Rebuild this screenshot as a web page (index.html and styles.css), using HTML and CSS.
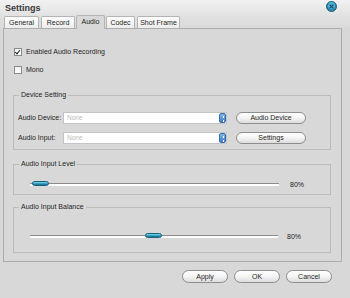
FILE: index.html
```html
<!DOCTYPE html>
<html lang="en">
  <head>
    <meta charset="UTF-8" />
    <title>Settings</title>
    <link rel="stylesheet" href="styles.css">
  </head>
  <body>
    <div class="window">
      <div class="titlebar">
        <span class="title">Settings</span>
        <svg class="close" width="11" height="11" viewBox="0 0 11 11">
          <circle cx="5.5" cy="5.5" r="5" fill="#2b88ad" stroke="#1d5f7c" stroke-width="1" />
          <circle cx="5.5" cy="4.5" r="3.6" fill="#5cc3e3" opacity="0.7" />
          <path d="M3.6 3.6 L7.4 7.4 M7.4 3.6 L3.6 7.4" stroke="#1d4f68" stroke-width="1.3" />
        </svg>
      </div>

      <div class="tabs">
        <div class="tab t-general">General</div>
        <div class="tab t-record">Record</div>
        <div class="tab active t-audio">Audio</div>
        <div class="tab t-codec">Codec</div>
        <div class="tab t-shot">Shot Frame</div>
      </div>

      <div class="panel">
        <label class="check-row">
          <span class="checkbox checked"></span>Enabled Audio Recording
        </label>
        <label class="check-row second">
          <span class="checkbox"></span>Mono
        </label>

        <fieldset class="group device">
          <legend>Device Setting</legend>
          <div class="field-row">
            <span class="field-label">Audio Device:</span>
            <div class="combo"><span>None</span><i class="spin"></i></div>
            <button class="pill wide">Audio Device</button>
          </div>
          <div class="field-row">
            <span class="field-label">Audio Input:</span>
            <div class="combo"><span>None</span><i class="spin"></i></div>
            <button class="pill wide">Settings</button>
          </div>
        </fieldset>

        <fieldset class="group level">
          <legend>Audio Input Level</legend>
          <div class="slider-row">
            <div class="track"><div class="thumb" style="left: 2px"></div></div>
            <span class="value">80%</span>
          </div>
        </fieldset>

        <fieldset class="group balance">
          <legend>Audio Input Balance</legend>
          <div class="slider-row">
            <div class="track short"><div class="thumb" style="left: 115px"></div></div>
            <span class="value">80%</span>
          </div>
        </fieldset>
      </div>

      <div class="footer">
        <button class="pill">Apply</button>
        <button class="pill">OK</button>
        <button class="pill">Cancel</button>
      </div>
    </div>
  </body>
</html>
```

FILE: styles.css
```css
body {
  margin: 0;
  font-family: "Liberation Sans", Arial, sans-serif;
  font-size: 7px;
  color: #1e1e1e;
}
.window {
  width: 350px;
  height: 298px;
  background-color: #d8d8d8;
  display: flex;
  flex-direction: column;
  box-sizing: border-box;
}
.titlebar {
  height: 15px;
  display: flex;
  align-items: center;
  justify-content: space-between;
  padding: 0 13px 0 5px;
  background: linear-gradient(#f2f2f2, #e2e2e2);
}
.title {
  font-size: 9px;
  font-weight: bold;
  color: #3a3a3a;
}
.close {
  margin-top: -2px;
}
.tabs {
  height: 13px;
  display: flex;
  align-items: flex-end;
  padding-left: 4px;
  background: linear-gradient(#e2e2e2, #dadada);
}
.tab {
  height: 11px;
  line-height: 11px;
  text-align: center;
  box-sizing: content-box;
  border: 1px solid #b4b4b4;
  border-bottom: none;
  border-radius: 2px 2px 0 0;
  background: linear-gradient(#ffffff, #ececec);
  margin-right: 1px;
}
.tab.active {
  height: 13px;
  line-height: 12px;
  background: #d8d8d8;
  margin-bottom: -1px;
  position: relative;
  z-index: 1;
}
.t-general { width: 33px; margin-right: 2px; }
.t-record { width: 32px; }
.t-audio { width: 27px; }
.t-codec { width: 27px; margin-right: 2px; }
.t-shot { width: 41px; }

.panel {
  width: 318px;
  margin-left: 3px;
  border: 1px solid #adadad;
  padding: 18px 10px 8px 9px;
  display: flex;
  flex-direction: column;
  box-sizing: content-box;
}
.check-row {
  height: 9px;
  display: flex;
  align-items: center;
}
.check-row.second {
  margin-top: 9px;
}
.checkbox {
  width: 6px;
  height: 6px;
  border: 1px solid #8a8a8a;
  background: linear-gradient(#f2f2f2, #ffffff);
  margin: 0 4px 0 1px;
  position: relative;
}
.checkbox.checked::after {
  content: "";
  position: absolute;
  left: 1px;
  top: 0px;
  width: 2px;
  height: 4px;
  border: solid #222;
  border-width: 0 1px 1px 0;
  transform: rotate(40deg);
}

.group {
  margin: 0;
  border: 1px solid #bcbcbc;
  padding: 13px 0 6px 4px;
  min-width: 0;
}
.group legend {
  line-height: 8px;
  padding: 0 2px;
  margin-left: 1px;
}
.device {
  margin-top: 17px;
}
.level {
  margin-top: 10px;
  padding-bottom: 7px;
}
.balance {
  margin-top: 8px;
  padding-top: 22px;
  padding-bottom: 13px;
}
.field-row {
  height: 11px;
  display: flex;
  align-items: center;
}
.field-row + .field-row {
  margin-top: 9px;
}
.field-label {
  width: 45px;
}
.combo {
  width: 159px;
  height: 10px;
  border: 1px solid #c4c4c4;
  background: #ffffff;
  display: flex;
  align-items: center;
  justify-content: space-between;
  color: #bdbdbd;
  padding-left: 3px;
  box-sizing: content-box;
}
.combo span {
  font-size: 6.5px;
}
.spin {
  width: 7px;
  height: 10px;
  border-radius: 2px;
  background:
    linear-gradient(#ffffff, #ffffff) 3px 2px / 1px 2px no-repeat,
    linear-gradient(#ffffff, #ffffff) 3px 6px / 1px 2px no-repeat,
    linear-gradient(#7fb4e6, #3d7fcf);
  border: 1px solid #3b6ea8;
  box-sizing: border-box;
}
.pill {
  font-family: "Liberation Sans", Arial, sans-serif;
  font-size: 7px;
  color: #1e1e1e;
  height: 13px;
  width: 46px;
  padding: 0;
  border: 1px solid #8e8e8e;
  border-radius: 7px;
  background: linear-gradient(#ffffff, #f4f4f4 50%, #dcdcdc);
}
.pill.wide {
  width: 70px;
  height: 12px;
  margin-left: 9px;
}
.slider-row {
  height: 6px;
  display: flex;
  align-items: center;
  padding-left: 12px;
}
.track {
  width: 249px;
  height: 2px;
  border-top: 1px solid #8c8c8c;
  background: #ffffff;
  position: relative;
}
.track.short {
  width: 248px;
}
.thumb {
  position: absolute;
  top: -3px;
  width: 17px;
  height: 5px;
  border-radius: 3px;
  background: linear-gradient(#7fe0f4, #2a93b5 60%, #1d6f8c);
  border: 1px solid #16607c;
  box-sizing: border-box;
}
.value {
  margin-left: 11px;
}
.balance .value {
  margin-left: 9px;
}
.footer {
  display: flex;
  justify-content: flex-end;
  gap: 6px;
  padding: 8px 18px 0 0;
}
```
